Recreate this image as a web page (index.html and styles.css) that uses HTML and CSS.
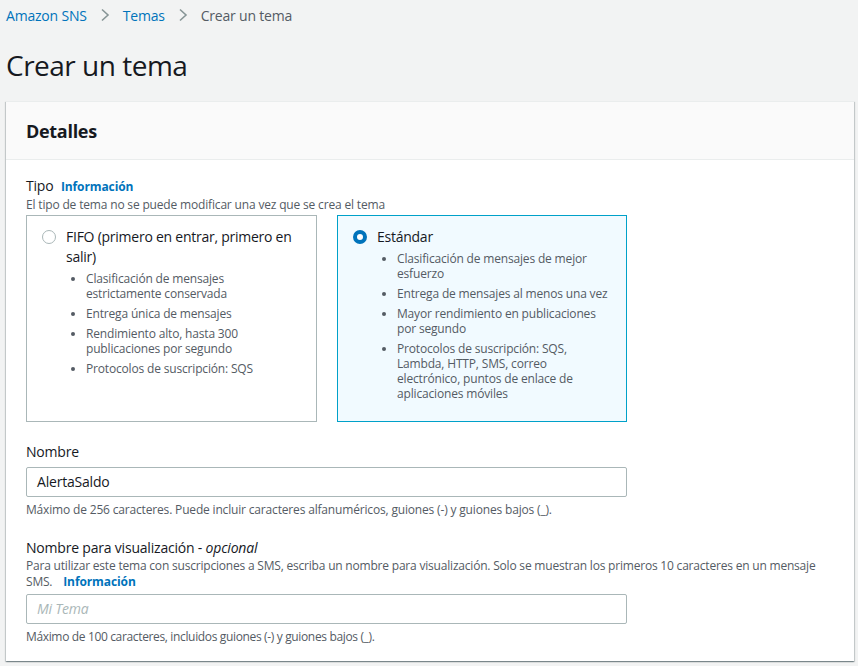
FILE: index.html
```html
<!DOCTYPE html>
<html lang="es">
<head>
<meta charset="utf-8">
<title>Crear un tema</title>
<link rel="stylesheet" href="styles.css">
</head>
<body>
<div class="page">
  <nav class="breadcrumb">
    <a href="#">Amazon SNS</a>
    <svg class="chev" width="10" height="14" viewBox="0 0 10 14"><path d="M2 1.5 L8 7 L2 12.5" fill="none" stroke="#879596" stroke-width="1.6"/></svg>
    <a href="#">Temas</a>
    <svg class="chev" width="10" height="14" viewBox="0 0 10 14"><path d="M2 1.5 L8 7 L2 12.5" fill="none" stroke="#879596" stroke-width="1.6"/></svg>
    <span class="current">Crear un tema</span>
  </nav>
  <h1 class="title">Crear un tema</h1>

  <section class="panel">
    <header class="panel-head"><h2>Detalles</h2></header>
    <div class="panel-body">
      <div class="field">
        <div class="label">Tipo <a class="info" href="#">Información</a></div>
        <div class="desc">El tipo de tema no se puede modificar una vez que se crea el tema</div>
        <div class="tiles">
          <div class="tile">
            <div class="tile-title"><span class="radio"></span><span>FIFO (primero en entrar, primero en salir)</span></div>
            <ul class="bullets">
              <li>Clasificación de mensajes estrictamente conservada</li>
              <li>Entrega única de mensajes</li>
              <li>Rendimiento alto, hasta 300 publicaciones por segundo</li>
              <li>Protocolos de suscripción: SQS</li>
            </ul>
          </div>
          <div class="tile selected">
            <div class="tile-title"><span class="radio checked"></span><span>Estándar</span></div>
            <ul class="bullets">
              <li>Clasificación de mensajes de mejor esfuerzo</li>
              <li>Entrega de mensajes al menos una vez</li>
              <li>Mayor rendimiento en publicaciones por segundo</li>
              <li>Protocolos de suscripción: SQS, Lambda, HTTP, SMS, correo electrónico, puntos de enlace de aplicaciones móviles</li>
            </ul>
          </div>
        </div>
      </div>

      <div class="field name-field">
        <div class="label">Nombre</div>
        <div class="input">AlertaSaldo</div>
        <div class="hint">Máximo de 256 caracteres. Puede incluir caracteres alfanuméricos, guiones (-) y guiones bajos (_).</div>
      </div>

      <div class="field display-field">
        <div class="label">Nombre para visualización - <i>opcional</i></div>
        <div class="desc"><span class="desc-line">Para utilizar este tema con suscripciones a SMS, escriba un nombre para visualización. Solo se muestran los primeros 10 caracteres en un mensaje</span><span class="desc-line">SMS. <a class="info" href="#">Información</a></span></div>
        <div class="input placeholder">Mi Tema</div>
        <div class="hint">Máximo de 100 caracteres, incluidos guiones (-) y guiones bajos (_).</div>
      </div>
    </div>
  </section>
</div>
</body>
</html>
```

FILE: styles.css
```css
* { box-sizing: border-box; }
html, body { margin: 0; padding: 0; }
body {
  background: #f2f3f3;
  font-family: "Open Sans", "Noto Sans", sans-serif;
  color: #16191f;
  width: 858px;
  height: 666px;
  overflow: hidden;
  letter-spacing: -0.2px;
}
.page { padding: 0 4px 0 6px; }
.breadcrumb {
  display: flex;
  align-items: center;
  gap: 13px;
  height: 30px;
  font-size: 14px;
}
.breadcrumb a { color: #0073bb; text-decoration: none; }
.breadcrumb .current { color: #545b64; }
.chev { display: block; }
.title {
  margin: 0;
  font-size: 28px;
  font-weight: 400;
  line-height: 36px;
  padding-top: 17px;
  height: 71px;
  letter-spacing: -0.5px;
}
.panel {
  background: #fff;
  box-shadow: 0 1px 1px 0 rgba(0,28,36,.3), 1px 1px 1px 0 rgba(0,28,36,.15), -1px 1px 1px 0 rgba(0,28,36,.15);
  border-top: 1px solid #eaeded;
  height: 560px;
}
.panel-head {
  background: #fafafa;
  border-bottom: 1px solid #eaeded;
  height: 58px;
  display: flex;
  align-items: center;
  padding: 0 20px;
}
.panel-head h2 { margin: 0; font-size: 18px; font-weight: 700; letter-spacing: -0.3px; }
.panel-body { padding: 16px 20px 0; }
.label { font-size: 14px; line-height: 20px; }
.info { color: #0073bb; font-weight: 700; font-size: 12px; text-decoration: none; margin-left: 4px; letter-spacing: -0.1px; }
.desc { font-size: 12px; line-height: 16px; color: #545b64; letter-spacing: -0.17px; }
.tiles { display: flex; gap: 20px; margin-top: 2px; }
.tile {
  width: 291px;
  height: 207px;
  border: 1px solid #aab7b8;
  padding: 11px 17px 0 14px;
}
.tile.selected { background: #f1faff; border-color: #00a1c9; width: 290px; }
.tile-title { display: flex; gap: 10px; font-size: 14px; line-height: 20px; letter-spacing: -0.25px; margin-right: -10px; }
.radio {
  flex: none;
  width: 14px; height: 14px;
  border-radius: 50%;
  border: 1px solid #aab7b8;
  margin-top: 3px;
  margin-left: 1px;
  background: #fff;
}
.radio.checked { border: 4px solid #0073bb; }
.bullets {
  margin: 4px 0 0;
  padding-left: 45px;
  font-size: 12px;
  line-height: 15px;
  color: #545b64;
  letter-spacing: -0.17px;
}
.bullets li { margin-bottom: 5px; }
.name-field { margin-top: 20px; }
.input {
  width: 601px;
  height: 30px;
  border: 1px solid #aab7b8;
  border-radius: 2px;
  background: #fff;
  font-size: 14px;
  line-height: 28px;
  padding: 0 10px;
  margin-top: 5px;
}
.input.placeholder { color: #aab7b8; font-style: italic; }
.hint { font-size: 12px; line-height: 16px; color: #545b64; margin-top: 5px; letter-spacing: -0.17px; }
.display-field { margin-top: 20px; }
.display-field .label { letter-spacing: -0.2px; }
.display-field .desc { margin-top: 0; line-height: 16px; letter-spacing: -0.2px; white-space: nowrap; }
.desc-line { display: block; }
.display-field .desc .info { margin-left: 8px; }
.display-field .input { margin-top: 4px; }
.display-field .hint { letter-spacing: -0.35px; }
```
